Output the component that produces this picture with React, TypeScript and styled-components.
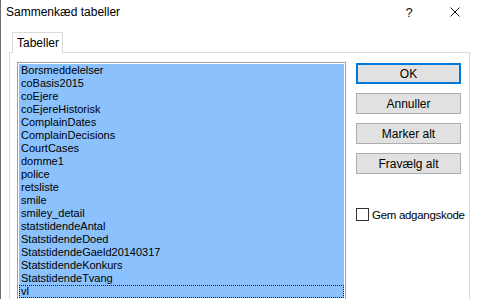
import styled, { createGlobalStyle } from 'styled-components';

const tables = [
  'Borsmeddelelser',
  'coBasis2015',
  'coEjere',
  'coEjereHistorisk',
  'ComplainDates',
  'ComplainDecisions',
  'CourtCases',
  'domme1',
  'police',
  'retsliste',
  'smile',
  'smiley_detail',
  'statstidendeAntal',
  'StatstidendeDoed',
  'StatstidendeGaeld20140317',
  'StatstidendeKonkurs',
  'StatstidendeTvang',
  'vl',
];

const GlobalStyle = createGlobalStyle`
  html, body {
    margin: 0;
    padding: 0;
    background: #ffffff;
  }
  body {
    font-family: 'Liberation Sans', Arial, sans-serif;
  }
`;

const Window = styled.div`
  box-sizing: border-box;
  width: 478px;
  height: 299px;
  overflow: hidden;
  background: #ffffff;
  border-left: 1px solid #6e6e6e;
  display: flex;
  flex-direction: column;
`;

const TitleBar = styled.div`
  height: 32px;
  display: flex;
  align-items: flex-start;
  padding-left: 5px;
  flex-shrink: 0;
`;

const Title = styled.div`
  flex: 1;
  line-height: 24px;
  font-size: 12px;
  color: #000;
`;

const CaptionButton = styled.div`
  width: 46px;
  height: 24px;
  display: flex;
  align-items: center;
  justify-content: center;
  font-size: 13px;
  color: #111;
`;

const Body = styled.div`
  flex: 1;
  display: flex;
  flex-direction: column;
  padding: 0 8px 0 8px;
  min-height: 0;
`;

const TabStrip = styled.div`
  display: flex;
  padding-left: 3px;
  position: relative;
  z-index: 1;
`;

const Tab = styled.div<{ $active?: boolean }>`
  box-sizing: border-box;
  width: 51px;
  height: 21px;
  padding-left: 4px;
  margin-bottom: -1px;
  display: flex;
  align-items: center;
  font-size: 12px;
  color: #000;
  background: #ffffff;
  border: 1px solid #d9d9d9;
  border-bottom: ${(p) => (p.$active ? '1px solid #ffffff' : '1px solid #d9d9d9')};
`;

const TabPanel = styled.div`
  flex: 1;
  display: flex;
  align-items: flex-start;
  border: 1px solid #d9d9d9;
  border-bottom: none;
  padding: 9px 0 0 7px;
  min-height: 0;
`;

const ListBox = styled.div`
  box-sizing: border-box;
  width: 329px;
  height: 260px;
  border: 1px solid #a0a0a0;
  border-bottom: none;
  padding: 1px 1px 0 1px;
  background: #ffffff;
  flex-shrink: 0;
`;

const Row = styled.div<{ $focused?: boolean }>`
  height: 13px;
  line-height: 13px;
  padding-left: 2px;
  font-size: 11px;
  color: #000;
  background: #8bc2fd;
  white-space: nowrap;
  outline: ${(p) => (p.$focused ? '1px dotted #1a1a1a' : 'none')};
  outline-offset: -1px;
`;

const SideColumn = styled.div`
  display: flex;
  flex-direction: column;
  margin-left: 10px;
  padding-top: 1px;
  flex-shrink: 0;
`;

const ButtonStack = styled.div`
  display: flex;
  flex-direction: column;
  gap: 9px;
`;

const Button = styled.div<{ $default?: boolean }>`
  box-sizing: border-box;
  width: 105px;
  height: 21px;
  display: flex;
  align-items: center;
  justify-content: center;
  font-size: 12px;
  color: #000;
  background: #e1e1e1;
  border: ${(p) => (p.$default ? '2px solid #0078d7' : '1px solid #adadad')};
`;

const CheckRow = styled.label`
  display: flex;
  align-items: center;
  gap: 3px;
  margin-top: 34px;
  font-size: 11.5px;
  letter-spacing: -0.3px;
  color: #000;
  white-space: nowrap;
`;

const CheckBox = styled.span`
  box-sizing: border-box;
  width: 13px;
  height: 13px;
  flex-shrink: 0;
  border: 1px solid #333333;
  background: #ffffff;
`;

function CloseIcon() {
  return (
    <svg width="10" height="10" viewBox="0 0 10 10">
      <path d="M0.5 0.5 L9.5 9.5 M9.5 0.5 L0.5 9.5" stroke="#111" strokeWidth="1" fill="none" />
    </svg>
  );
}

export default function App() {
  return (
    <>
      <GlobalStyle />
      <Window>
        <TitleBar>
          <Title>Sammenkæd tabeller</Title>
          <CaptionButton>?</CaptionButton>
          <CaptionButton>
            <CloseIcon />
          </CaptionButton>
        </TitleBar>
        <Body>
          <TabStrip>
            <Tab $active>Tabeller</Tab>
          </TabStrip>
          <TabPanel>
            <ListBox>
              {tables.map((t, i) => (
                <Row key={t} $focused={i === tables.length - 1}>
                  {t}
                </Row>
              ))}
            </ListBox>
            <SideColumn>
              <ButtonStack>
                <Button $default>OK</Button>
                <Button>Annuller</Button>
                <Button>Marker alt</Button>
                <Button>Fravælg alt</Button>
              </ButtonStack>
              <CheckRow>
                <CheckBox />
                Gem adgangskode
              </CheckRow>
            </SideColumn>
          </TabPanel>
        </Body>
      </Window>
    </>
  );
}
